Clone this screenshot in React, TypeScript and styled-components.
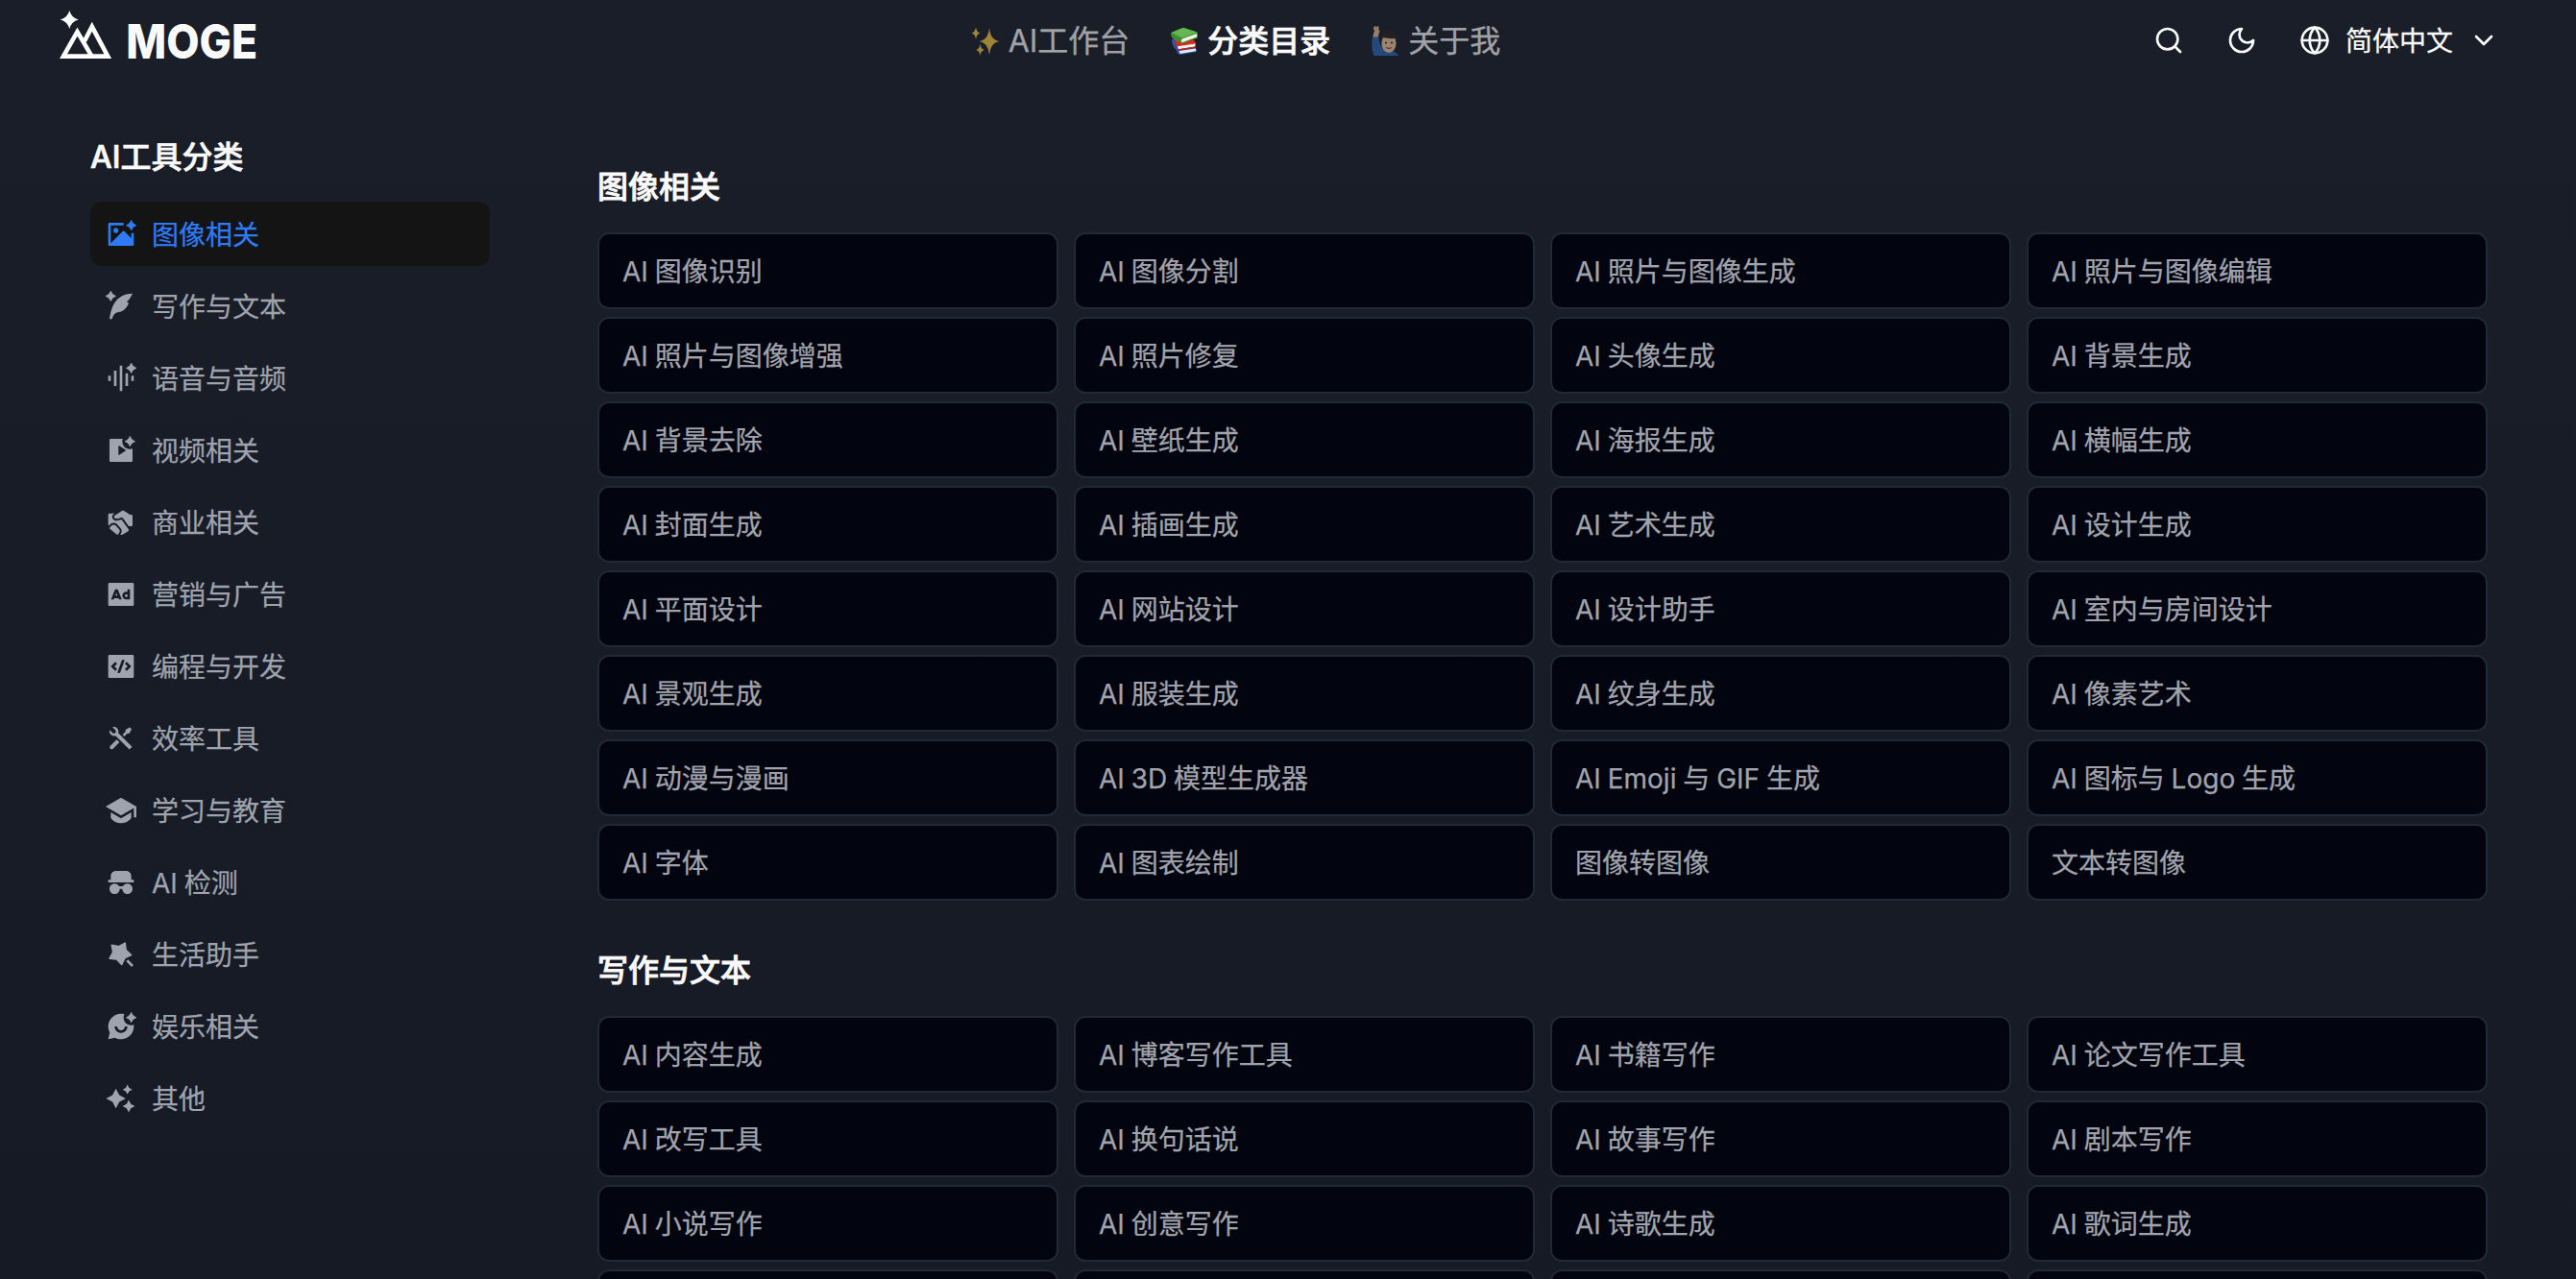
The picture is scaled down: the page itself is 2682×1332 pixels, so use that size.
import React from 'react';
import styled, { createGlobalStyle } from 'styled-components';
import type { IconType } from 'react-icons';
import {
  RiImageAiFill, RiQuillPenAiFill, RiVoiceAiFill, RiVideoAiFill, RiShakeHandsFill,
  RiAdvertisementFill, RiCodeBoxFill, RiToolsFill, RiGraduationCapFill, RiSpyFill,
  RiMagicFill, RiChatSmileAiFill, RiSparkling2Fill,
} from 'react-icons/ri';

const GlobalStyle = createGlobalStyle`
  *, *::before, *::after { box-sizing: border-box; }
  html, body { margin: 0; padding: 0; overflow: hidden; }
  body {
    background: #161a24;
    font-family: Inter, "Noto Sans CJK SC", sans-serif;
    word-spacing: -1px;
    -webkit-text-stroke: 0.25px currentColor;
  }
  h1, h2, p, ul { margin: 0; padding: 0; }
  ul { list-style: none; }
`;

const Page = styled.div`
  width: 100%;
  height: 1332px;
  overflow: hidden;
  background: linear-gradient(180deg, #1a1e29 0%, #161a24 100%);
  color: #fafafa;
`;

const Header = styled.header`
  display: grid;
  grid-template-columns: 1fr auto 1fr;
  align-items: center;
  height: 84px;
  padding: 0 80px 0 60px;
`;

const Brand = styled.a`
  display: flex;
  align-items: center;
  height: 84px;
`;

const BrandSvg = styled.svg`
  display: block;
  width: 240px;
  height: 84px;
  overflow: visible;
`;

const Nav = styled.nav`
  display: flex;
  align-items: center;
  gap: 42px;
  margin-right: 89px;
`;

const NavItem = styled.a<{ $active?: boolean }>`
  display: flex;
  align-items: center;
  gap: 9px;
  font-size: 32px;
  line-height: 48px;
  font-weight: ${(p) => (p.$active ? 500 : 400)};
  -webkit-text-stroke-width: ${(p) => (p.$active ? '0.7px' : '0.25px')};
  color: #fafafa;
  opacity: ${(p) => (p.$active ? 1 : 0.6)};
  white-space: nowrap;
`;

const Label = styled.span`
  padding-top: 2px;
`;

const Emoji = styled.svg`
  width: 30px;
  height: 32px;
  flex: none;
`;

const Actions = styled.div`
  display: flex;
  justify-content: flex-end;
  align-items: center;
  gap: 44px;
`;

const StrokeIcon = styled.svg`
  width: 32px;
  height: 32px;
  fill: none;
  stroke: currentColor;
  stroke-width: 2;
  stroke-linecap: round;
  stroke-linejoin: round;
  flex: none;
`;

const Language = styled.div`
  display: flex;
  align-items: center;
  gap: 16px;
  font-size: 28px;
  line-height: 40px;
`;

const Body = styled.div`
  display: grid;
  grid-template-columns: 416px 1968px;
  column-gap: 112px;
  padding-left: 94px;
`;

const Sidebar = styled.aside`
  padding-top: 56px;
`;

const SidebarTitle = styled.h1`
  font-size: 32px;
  line-height: 48px;
  font-weight: 500;
  -webkit-text-stroke-width: 0.7px;
  margin-bottom: 22px;
`;

const Menu = styled.ul`
  display: flex;
  flex-direction: column;
  gap: 8px;
`;

const MenuItem = styled.li<{ $active?: boolean }>`
  display: flex;
  align-items: center;
  gap: 16px;
  height: 67px;
  padding: 0 16px;
  border-radius: 12px;
  font-size: 28px;
  line-height: 40px;
  background: ${(p) => (p.$active ? '#141414' : 'transparent')};
  color: ${(p) => (p.$active ? '#2f7bf6' : '#9ea3ae')};

  svg { width: 32px; height: 32px; flex: none; }
`;

const Main = styled.main`
  display: flex;
  flex-direction: column;
  gap: 49px;
  padding-top: 87px;
`;

const SectionTitle = styled.h2`
  font-size: 32px;
  line-height: 48px;
  font-weight: 500;
  -webkit-text-stroke-width: 0.8px;
  margin-bottom: 23px;
`;

const Grid = styled.div`
  display: grid;
  grid-template-columns: repeat(4, 480px);
  gap: 8px 16px;
`;

const Card = styled.a`
  display: flex;
  align-items: center;
  height: 80px;
  padding: 0 24px;
  border: 2px solid #1f2937;
  border-radius: 12px;
  background: #02050f;
  color: #a1a3ad;
  font-size: 28px;
  line-height: 40px;
`;

const menu: { icon: IconType; label: string }[] = [
  { icon: RiImageAiFill, label: '图像相关' },
  { icon: RiQuillPenAiFill, label: '写作与文本' },
  { icon: RiVoiceAiFill, label: '语音与音频' },
  { icon: RiVideoAiFill, label: '视频相关' },
  { icon: RiShakeHandsFill, label: '商业相关' },
  { icon: RiAdvertisementFill, label: '营销与广告' },
  { icon: RiCodeBoxFill, label: '编程与开发' },
  { icon: RiToolsFill, label: '效率工具' },
  { icon: RiGraduationCapFill, label: '学习与教育' },
  { icon: RiSpyFill, label: 'AI 检测' },
  { icon: RiMagicFill, label: '生活助手' },
  { icon: RiChatSmileAiFill, label: '娱乐相关' },
  { icon: RiSparkling2Fill, label: '其他' },
];

const sections: { title: string; items: string[] }[] = [
  {
    title: '图像相关',
    items: [
      'AI 图像识别', 'AI 图像分割', 'AI 照片与图像生成', 'AI 照片与图像编辑',
      'AI 照片与图像增强', 'AI 照片修复', 'AI 头像生成', 'AI 背景生成',
      'AI 背景去除', 'AI 壁纸生成', 'AI 海报生成', 'AI 横幅生成',
      'AI 封面生成', 'AI 插画生成', 'AI 艺术生成', 'AI 设计生成',
      'AI 平面设计', 'AI 网站设计', 'AI 设计助手', 'AI 室内与房间设计',
      'AI 景观生成', 'AI 服装生成', 'AI 纹身生成', 'AI 像素艺术',
      'AI 动漫与漫画', 'AI 3D 模型生成器', 'AI Emoji 与 GIF 生成', 'AI 图标与 Logo 生成',
      'AI 字体', 'AI 图表绘制', '图像转图像', '文本转图像',
    ],
  },
  {
    title: '写作与文本',
    items: [
      'AI 内容生成', 'AI 博客写作工具', 'AI 书籍写作', 'AI 论文写作工具',
      'AI 改写工具', 'AI 换句话说', 'AI 故事写作', 'AI 剧本写作',
      'AI 小说写作', 'AI 创意写作', 'AI 诗歌生成', 'AI 歌词生成',
      '', '', '', '',
    ],
  },
];

const Logo = () => (
  <BrandSvg viewBox="0 0 240 84" aria-label="MOGE">
    <path d="M12.3 11 Q14.3 18.5 21.7 20.5 Q14.3 22.5 12.3 30 Q10.3 22.5 2.8 20.5 Q10.3 18.5 12.3 11Z" fill="#fff" />
    <path
      d="M6 58.600 L20.500 33 L35.600 58.600 Z M28 42.800 L35.800 27.800 L52.300 58.600 L35.600 58.600"
      fill="none" stroke="#fff" strokeWidth="4.600"
    />
    <text
      x="71.200" y="61" fontFamily="Inter, sans-serif" fontWeight="800" fontSize="49.500"
      textLength="137" lengthAdjust="spacingAndGlyphs" fill="#fafafa" stroke="none"
    >
      MOGE
    </text>
  </BrandSvg>
);

const Sparkles = () => (
  <Emoji viewBox="0 0 30 32" aria-label="✨">
    <g fill="#f5c843">
      <path d="M19 2.500 Q20 15.500 29.500 17 Q20 18.500 19 31 Q18 18.500 8.500 17 Q18 15.500 19 2.500Z" />
      <path d="M5 2 Q5.600 7.400 9.500 8.500 Q5.600 9.600 5 15 Q4.400 9.600 .5 8.500 Q4.400 7.400 5 2Z" />
      <path d="M9.500 19.500 Q10 25 14 26 Q10 27 9.500 32 Q9 27 5 26 Q9 25 9.500 19.500Z" />
    </g>
  </Emoji>
);

const Books = () => (
  <Emoji viewBox="0 0 30 32" aria-label="📚">
    <path d="M3 22 L22 19.5 L28 25.5 L28 28 L11 31 Q7 30 7 26.5Z" fill="#2f4fa8" />
    <path d="M9.5 27 L27 24.5 L27 27.3 L10.5 30Z" fill="#e9e9e4" />
    <path d="M2 15 L8 13 L12 27 L8 26Q4 24 2 18Z" fill="#35509f" />
    <path d="M5 14 L21 11 L27 18.5 L27 20 L10 25 Q6 22 5 14Z" fill="#d8281f" />
    <path d="M8 22.3 L26.5 19.5 L26.5 22.5 L9 25.3Z" fill="#f2efe9" />
    <path d="M8.5 25.2 L26.5 22.4 L26.5 23.8 L9 26.6Z" fill="#c92019" />
    <path d="M1 8.5 Q2 7 14 3 L29 8 L29 13.5 L13 19.5 Q4 15.5 1.5 12Z" fill="#3f8d33" />
    <path d="M1.5 8 L14 2.8 L28.5 7.5 L13 13.5Z" fill="#65b74f" />
    <path d="M12.8 14.6 L28 9 L28 12.6 L12.8 18.2 Q10.8 16.5 12.8 14.6Z" fill="#f0f1ea" />
  </Emoji>
);

const RaisedHand = () => (
  <Emoji viewBox="0 0 30 32" aria-label="🙋🏼‍♂️">
    <path d="M2 12 L8 11 Q9 20 12 23.5 L19 27 Q27 27 29 32 L3.5 32 Q0 25 2 12Z" fill="#2b66b3" />
    <path d="M2.5 12.5 Q2.5 9 4 6.500 L2.800 3 L4.600 1 Q5.500 .5 6 2.500 L7.500 1 Q9 1.300 8.400 5 Q10.500 6 8.500 9 L8 12.500Z" fill="#eabf92" />
    <ellipse cx="19" cy="19" rx="7.6" ry="10" fill="#f0c8a0" />
    <path d="M11 17.500 Q9 8 14.500 7.500 Q19 4 24.500 7 Q29 9 27 17.500 L25.800 14 Q19 14.500 12.500 13Z" fill="#28221f" />
    <circle cx="16" cy="18.5" r="1.1" fill="#3b2417" />
    <circle cx="22" cy="18.500" r="1.100" fill="#3b2417" />
    <path d="M16 23.500 Q19 26 22 23.500 Q19 24.500 16 23.500Z" fill="#8a4a32" stroke="#8a4a32" strokeWidth=".6" />
  </Emoji>
);

export default function App() {
  return (
    <>
      <GlobalStyle />
      <Page>
        <Header>
          <Brand><Logo /></Brand>
          <Nav>
            <NavItem><Sparkles /><Label>AI工作台</Label></NavItem>
            <NavItem $active><Books /><Label>分类目录</Label></NavItem>
            <NavItem><RaisedHand /><Label>关于我</Label></NavItem>
          </Nav>
          <Actions>
            <StrokeIcon viewBox="0 0 24 24"><circle cx="11" cy="11" r="8" /><path d="m21 21-4.300-4.300" /></StrokeIcon>
            <StrokeIcon viewBox="0 0 24 24"><path d="M12 3a6 6 0 0 0 9 9 9 9 0 1 1-9-9Z" /></StrokeIcon>
            <Language>
              <StrokeIcon viewBox="0 0 24 24"><circle cx="12" cy="12" r="10" /><path d="M12 2a14.500 14.500 0 0 0 0 20 14.500 14.500 0 0 0 0-20" /><path d="M2 12h20" /></StrokeIcon>
              <Label>简体中文</Label>
              <StrokeIcon viewBox="0 0 24 24"><path d="m6 9 6 6 6-6" /></StrokeIcon>
            </Language>
          </Actions>
        </Header>
        <Body>
          <Sidebar>
            <SidebarTitle>AI工具分类</SidebarTitle>
            <Menu>
              {menu.map(({ icon: Icon, label }, i) => (
                <MenuItem key={label} $active={i === 0}><Icon /><Label>{label}</Label></MenuItem>
              ))}
            </Menu>
          </Sidebar>
          <Main>
            {sections.map((s) => (
              <section key={s.title}>
                <SectionTitle>{s.title}</SectionTitle>
                <Grid>
                  {s.items.map((item, i) => <Card key={i}><Label>{item}</Label></Card>)}
                </Grid>
              </section>
            ))}
          </Main>
        </Body>
      </Page>
    </>
  );
}
